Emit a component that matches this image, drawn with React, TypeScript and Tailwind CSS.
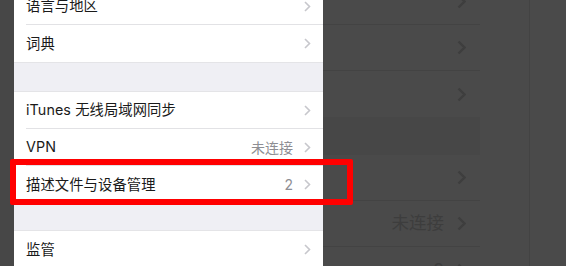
import React from 'react';

type Row = { label: string; value?: string; last?: boolean };

const font = { fontFamily: '"Inter", "Noto Sans CJK SC", sans-serif' };

function Chevron({ big = false }: { big?: boolean }) {
  if (big) {
    return (
      <svg width="9" height="15" viewBox="0 0 9 15" className="shrink-0">
        <polyline points="1.5,1.5 7.5,7.5 1.5,13.5" fill="none" stroke="#3e3e3e" strokeWidth="2.4" />
      </svg>
    );
  }
  return (
    <svg width="7" height="11" viewBox="0 0 7 11" className="shrink-0">
      <polyline points="1,1 5.5,5.5 1,10" fill="none" stroke="#c7c7cc" strokeWidth="1.6" />
    </svg>
  );
}

function SettingsRow({ label, value, last }: Row) {
  return (
    <div className="h-[37px] shrink-0 bg-white pl-[12px] flex">
      <div
        className={`flex-1 flex items-center pr-[12px] ${last ? '' : 'border-b border-[#e2e2e5]'}`}
      >
        <span className="flex-1 text-[14.3px] text-[#1a1a1a] tracking-[0.1px]">{label}</span>
        {value && <span className="text-[14px] text-[#8e8e93] mr-[11px]">{value}</span>}
        <Chevron />
      </div>
    </div>
  );
}

function Group({ rows }: { rows: Row[] }) {
  return (
    <div className="shrink-0 border-y border-[#e4e4e7]">
      {rows.map((r, i) => (
        <SettingsRow key={r.label} {...r} last={i === rows.length - 1} />
      ))}
    </div>
  );
}

function GhostRow({ value, last }: { value?: string; last?: boolean }) {
  return (
    <div
      className={`h-[46px] shrink-0 flex items-center justify-end pr-[14px] ${last ? '' : 'border-b border-[#434343]'}`}
    >
      {value && <span className="text-[17.5px] text-[#3d3d3d] mr-[13px]">{value}</span>}
      <Chevron big />
    </div>
  );
}

export default function App() {
  return (
    <div className="relative w-[566px] h-[266px] overflow-hidden bg-[#4a4a4a] flex" style={font}>
      {/* left dark strip */}
      <div className="w-[14px] bg-[#474747]" />

      {/* settings panel */}
      <div className="w-[309px] bg-[#efeff4] -mt-[13px] flex flex-col">
        <Group rows={[{ label: '语言与地区' }, { label: '词典' }]} />
        <div className="h-[28px] shrink-0" />
        <Group
          rows={[
            { label: 'iTunes 无线局域网同步' },
            { label: 'VPN', value: '未连接' },
            { label: '描述文件与设备管理', value: '2' },
          ]}
        />
        <div className="h-[26px] shrink-0" />
        <Group rows={[{ label: '监管' }]} />
      </div>

      {/* dimmed enlarged background */}
      <div className="flex-1 flex">
        <div className="w-[157px] -mt-[21px] flex flex-col">
          <GhostRow />
          <GhostRow />
          <GhostRow last />
          <div className="h-[38px] shrink-0 bg-[#474747]" />
          <GhostRow />
          <GhostRow value="未连接" />
          <GhostRow value="2" last />
        </div>
        <div className="w-[50px] border-r border-[#434343]" />
      </div>

      {/* red highlight */}
      <div className="absolute left-[10px] top-[159px] w-[343px] h-[46px] border-[6px] border-[#ff0000] rounded-[2px]" />
    </div>
  );
}
